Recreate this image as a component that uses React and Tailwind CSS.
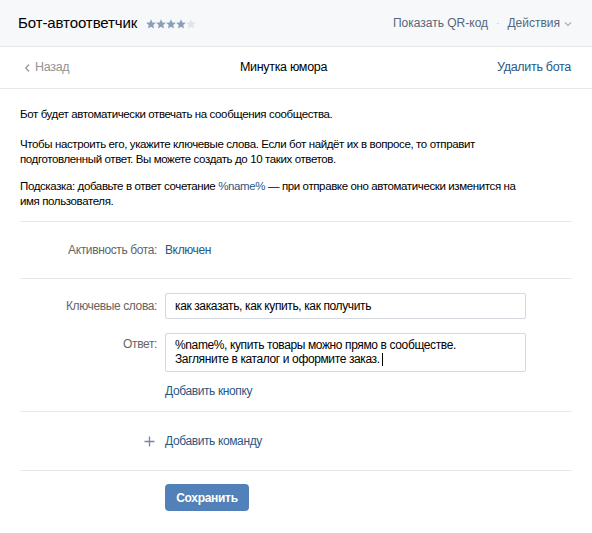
import React from "react";

function Star({ color }) {
  return (
    <svg width="10" height="10" viewBox="1 1 22 22" className="shrink-0">
      <path
        fill={color}
        d="M12 1.5l3.1 7.1 7.7.7-5.8 5.1 1.7 7.6L12 18l-6.7 4 1.7-7.6-5.8-5.1 7.7-.7z"
      />
    </svg>
  );
}

export default function App() {
  return (
    <div className="w-[592px] h-[533px] bg-white font-['Liberation_Sans',Arial,sans-serif] text-[12px] text-black overflow-hidden">
      {/* header */}
      <div className="h-[47px] bg-[#f7f8fa] border-b border-[#e7e8ec] flex items-center justify-between pl-[18px] pr-[20px]">
        <div className="flex items-center">
          <span className="text-[15px] tracking-[-0.1px] text-[#000]">Бот-автоответчик</span>
          <div className="flex items-center ml-[9px] mt-[1px]">
            <Star color="#8b9eb8" />
            <Star color="#8b9eb8" />
            <Star color="#8b9eb8" />
            <Star color="#8b9eb8" />
            <Star color="#dfe3e9" />
          </div>
        </div>
        <div className="flex items-center text-[12px] text-[#55677d]">
          <span>Показать QR-код</span>
          <span className="mx-[8px] text-[#b6bec8] text-[10px]">·</span>
          <span>Действия</span>
          <svg width="8" height="6" viewBox="0 0 8 6" className="ml-[4px] mt-[2px]">
            <path d="M1 1.5l3 3 3-3" fill="none" stroke="#a3adba" strokeWidth="1.1" />
          </svg>
        </div>
      </div>

      {/* sub bar */}
      <div className="h-[42px] border-b border-[#e7e8ec] flex items-center justify-between pl-[24px] pr-[21px] text-[12.5px] tracking-[-0.3px]">
        <div className="flex items-center w-[120px] text-[#939393]">
          <svg width="7" height="10" viewBox="0 0 7 10" className="mr-[4px]">
            <path d="M5 1.5L1.8 5 5 8.5" fill="none" stroke="#a0a0a0" strokeWidth="1.5" />
          </svg>
          <span>Назад</span>
        </div>
        <span className="text-black mr-[28px]">Минутка юмора</span>
        <div className="w-[120px] text-right text-[#2a5885]">Удалить бота</div>
      </div>

      {/* content */}
      <div className="px-[20px] tracking-[-0.38px]">
        <div className="pt-[18px] pb-[12px] leading-[15px] text-[11.5px] text-[#000]">
          <p>Бот будет автоматически отвечать на сообщения сообщества.</p>
          <p className="mt-[15px]">
            Чтобы настроить его, укажите ключевые слова. Если бот найдёт их в вопросе, то отправит
            <br />
            подготовленный ответ. Вы можете создать до 10 таких ответов.
          </p>
          <p className="mt-[12px]">
            Подсказка: добавьте в ответ сочетание <span className="text-[#2a5885]">%name%</span> — при отправке оно автоматически изменится на
            <br />
            имя пользователя.
          </p>
        </div>

        <div className="border-t border-[#e7e8ec]" />

        <div className="h-[56px] flex items-center">
          <div className="w-[137px] text-right text-[#656565]">Активность бота:</div>
          <div className="ml-[8px] text-[#2a5885]">Включен</div>
        </div>

        <div className="border-t border-[#e7e8ec]" />

        <div className="pt-[14px]">
          <div className="flex items-center">
            <div className="w-[137px] text-right text-[#656565]">Ключевые слова:</div>
            <div className="ml-[8px] w-[361px] h-[26px] border border-[#d3d9de] rounded-[2px] flex items-center px-[9px] text-black">
              как заказать, как купить, как получить
            </div>
          </div>
          <div className="flex items-start mt-[14px]">
            <div className="w-[137px] text-right text-[#656565] pt-[2px]">Ответ:</div>
            <div className="ml-[8px] w-[361px] h-[39px] border border-[#d3d9de] rounded-[2px] px-[9px] pt-[4px] leading-[14px] text-black">
              %name%, купить товары можно прямо в сообществе.
              <br />
              Загляните в каталог и оформите заказ.
              <span className="inline-block w-[1px] h-[13px] bg-black align-middle ml-[2px]" />
            </div>
          </div>
          <div className="ml-[145px] mt-[12px] h-[15px] leading-[15px] text-[#2a5885]">Добавить кнопку</div>
        </div>

        <div className="border-t border-[#e7e8ec] mt-[12px]" />

        <div className="h-[58px] flex items-center">
          <div className="w-[137px] flex justify-end">
            <svg width="11" height="11" viewBox="0 0 11 11" className="mr-[2px]">
              <path d="M5.5 0.5v10M0.5 5.5h10" stroke="#6f88a8" strokeWidth="1.3" />
            </svg>
          </div>
          <div className="ml-[8px] text-[#2a5885]">Добавить команду</div>
        </div>

        <div className="border-t border-[#e7e8ec]" />

        <div className="pt-[13px]">
          <button className="ml-[145px] w-[84px] h-[27px] rounded-[4px] bg-[#5181b8] text-white text-[12px] font-bold tracking-[-0.3px]">
            Сохранить
          </button>
        </div>
      </div>
    </div>
  );
}
